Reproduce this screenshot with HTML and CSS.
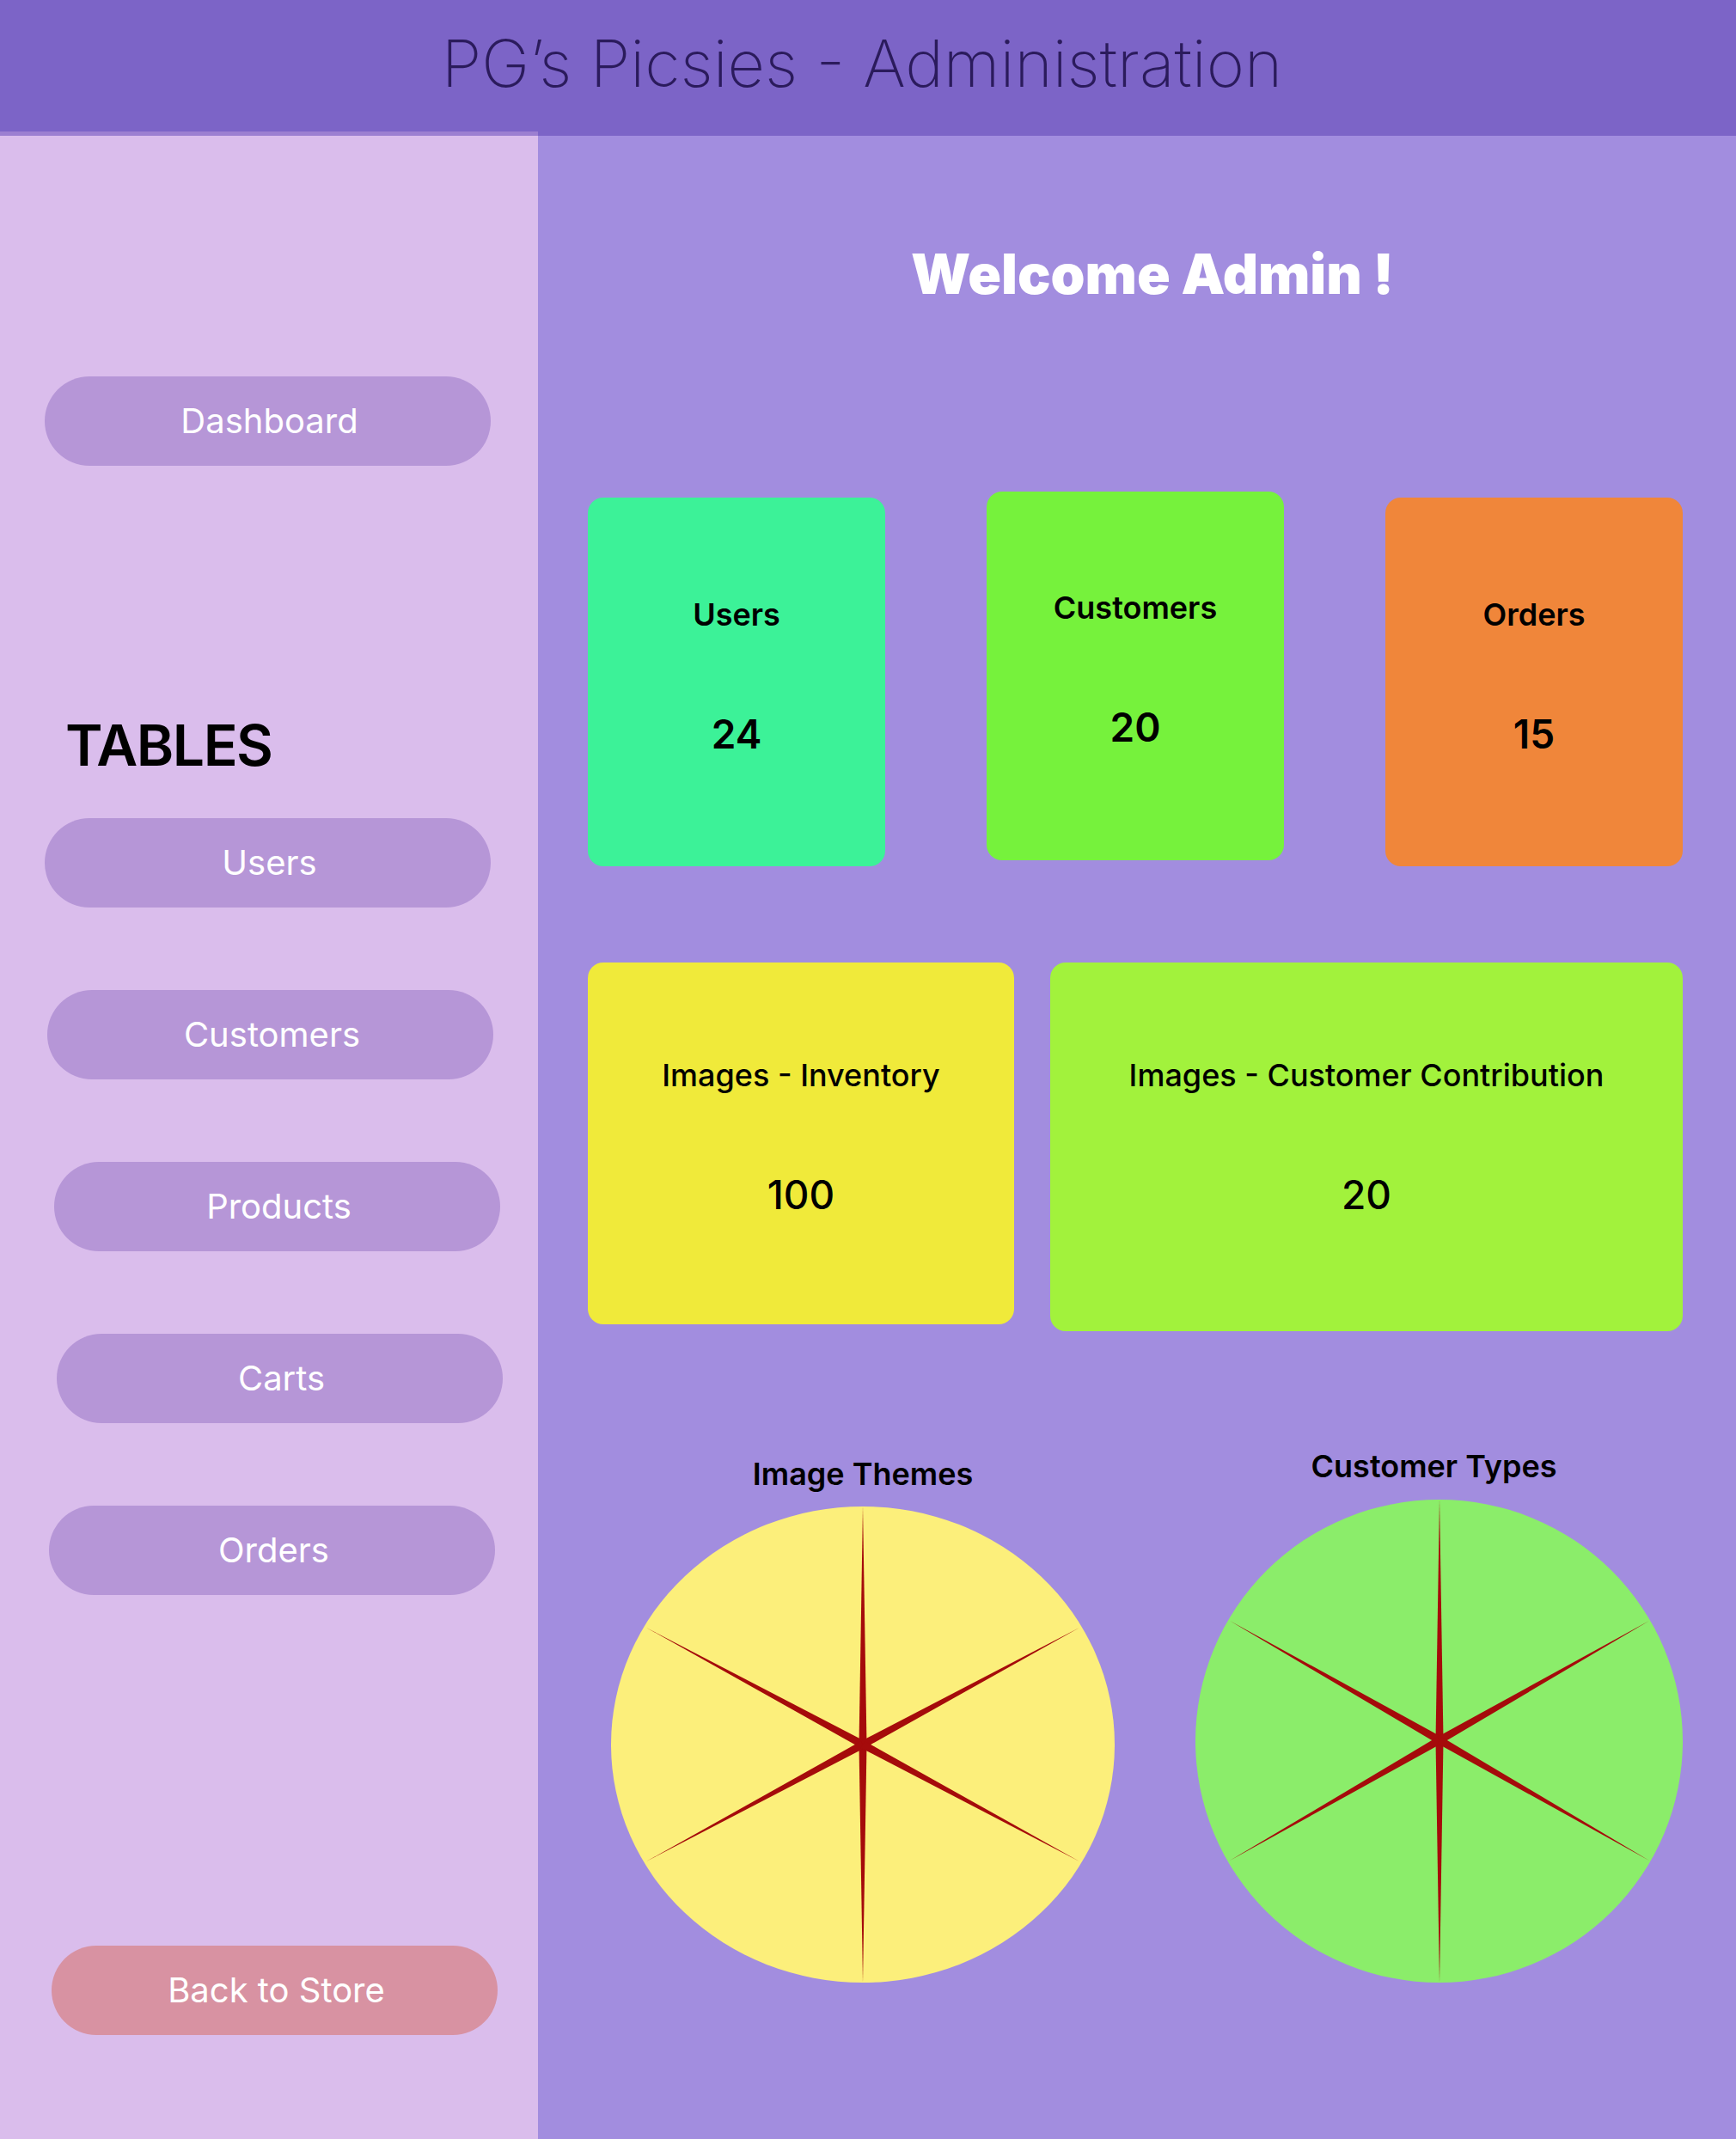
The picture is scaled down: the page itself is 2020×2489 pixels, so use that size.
FILE: index.html
```html
<!DOCTYPE html>
<html lang="en">
<head>
<meta charset="utf-8">
<title>PG’s Picsies - Administration</title>
<link rel="stylesheet" href="styles.css">
</head>
<body>
<div class="page">
  <header class="topbar">
    <h1 class="brand">PG’s Picsies - Administration</h1>
  </header>
  <div class="layout">
    <aside class="sidebar">
      <a class="nav-btn nav-dashboard" href="#">Dashboard</a>
      <h2 class="tables-title">TABLES</h2>
      <nav class="table-list">
        <a class="nav-btn nav-users" href="#">Users</a>
        <a class="nav-btn nav-customers" href="#">Customers</a>
        <a class="nav-btn nav-products" href="#">Products</a>
        <a class="nav-btn nav-carts" href="#">Carts</a>
        <a class="nav-btn nav-orders" href="#">Orders</a>
      </nav>
      <a class="nav-btn back-btn" href="#">Back to Store</a>
    </aside>
    <main class="content">
      <h2 class="welcome">Welcome Admin !</h2>
      <section class="stats-row">
        <div class="stat stat-users"><span class="stat-label">Users</span><span class="stat-value">24</span></div>
        <div class="stat stat-customers"><span class="stat-label">Customers</span><span class="stat-value">20</span></div>
        <div class="stat stat-orders"><span class="stat-label">Orders</span><span class="stat-value">15</span></div>
      </section>
      <section class="images-row">
        <div class="stat stat-inventory"><span class="stat-label light">Images - Inventory</span><span class="stat-value light">100</span></div>
        <div class="stat stat-contrib"><span class="stat-label light">Images - Customer Contribution</span><span class="stat-value light">20</span></div>
      </section>
      <section class="charts-row">
        <figure class="chart chart-themes">
          <figcaption class="chart-title">Image Themes</figcaption>
          <svg class="pie" width="586" height="554" viewBox="0 0 586 554">
            <ellipse cx="293" cy="277" rx="293" ry="277" fill="#fcef7b"/>
            <g fill="#a50b0b">
              <polygon points="293,0 297.5,277 288.5,277"/>
              <polygon points="293,554 297.5,277 288.5,277"/>
              <polygon points="41,141 295.2,273.1 290.8,280.9"/>
              <polygon points="545,141 295.2,280.9 290.8,273.1"/>
              <polygon points="41,413 290.8,273.1 295.2,280.9"/>
              <polygon points="545,413 290.8,280.9 295.2,273.1"/>
            </g>
          </svg>
        </figure>
        <figure class="chart chart-types">
          <figcaption class="chart-title">Customer Types</figcaption>
          <svg class="pie" width="567" height="562" viewBox="0 0 567 562">
            <ellipse cx="283.5" cy="281" rx="283.5" ry="281" fill="#8bed6a"/>
            <g fill="#a50b0b">
              <polygon points="284,0 288.5,280 279.5,280"/>
              <polygon points="284,562 288.5,280 279.5,280"/>
              <polygon points="40,141 286.2,276.1 281.8,283.9"/>
              <polygon points="528,141 286.2,283.9 281.8,276.1"/>
              <polygon points="40,420 281.8,276.1 286.2,283.9"/>
              <polygon points="528,420 281.8,283.9 286.2,276.1"/>
            </g>
          </svg>
        </figure>
      </section>
    </main>
  </div>
</div>
</body>
</html>
```
FILE: styles.css
```css
* { box-sizing: border-box; }
html, body { margin: 0; padding: 0; }
body {
  font-family: Inter, "Noto Sans", "Liberation Sans", sans-serif;
  background: #a28ddf;
}
.page {
  width: 2020px;
  height: 2489px;
  display: flex;
  flex-direction: column;
}
.topbar {
  height: 153px;
  background: #7c64c7;
  display: flex;
  justify-content: center;
  align-items: flex-start;
  flex: none;
}
.brand {
  margin: 36px 14px 0 0;
  font-size: 75.5px;
  line-height: 76px;
  font-weight: 200;
  color: #2b1b5c;
  letter-spacing: 0;
}
.layout {
  flex: 1;
  display: flex;
}
.sidebar {
  width: 626px;
  flex: none;
  background: #dabdec;
  border-top: 5px solid #9c7fd1;
  display: flex;
  flex-direction: column;
  align-items: flex-start;
  padding-top: 280px;
}
.nav-btn {
  display: flex;
  align-items: center;
  justify-content: center;
  width: 519px;
  height: 104px;
  padding: 0 0 2px 4px;
  border-radius: 52px;
  background: #b696d7;
  color: #ffffff;
  font-size: 40px;
  font-weight: 400;
  text-decoration: none;
  flex: none;
}
.nav-dashboard { margin-left: 52px; }
.tables-title {
  margin: 292px 0 0 76px;
  font-size: 66px;
  line-height: 66px;
  font-weight: 600;
  letter-spacing: -1.5px;
  color: #000000;
}
.table-list {
  margin-top: 52px;
  display: flex;
  flex-direction: column;
  gap: 96px;
}
.nav-users { margin-left: 52px; }
.nav-customers { margin-left: 55px; }
.nav-products { margin-left: 63px; }
.nav-carts { margin-left: 66px; }
.nav-orders { margin-left: 57px; }
.back-btn {
  margin: 408px 0 0 60px;
  background: #d892a2;
}
.content {
  flex: 1;
  border-top: 5px solid #7c64c7;
  padding: 129px 62px 0 58px;
  display: flex;
  flex-direction: column;
}
.welcome {
  margin: 0 0 0 40px;
  text-align: center;
  font-size: 64px;
  line-height: 64px;
  font-weight: 900;
  color: #ffffff;
}
.stats-row {
  margin-top: 221px;
  display: flex;
  justify-content: space-between;
  align-items: flex-start;
}
.stat {
  display: flex;
  flex-direction: column;
  align-items: center;
  border-radius: 18px;
  padding-top: 118px;
  color: #000000;
}
.stats-row .stat {
  width: 346px;
  height: 429px;
}
.stat-users { background: #3cf298; margin-top: 7px; }
.stat-customers { background: #76f23c; padding-top: 117px; }
.stat-orders { background: #f0863a; margin-top: 7px; }
.stat-label {
  font-size: 36px;
  line-height: 36px;
  font-weight: 600;
}
.stat-value {
  margin-top: 98px;
  font-size: 46px;
  line-height: 46px;
  font-weight: 600;
}
.light { font-weight: 500; }
.images-row {
  margin-top: 112px;
  display: grid;
  grid-template-columns: 496px 736px;
  column-gap: 42px;
  align-items: start;
}
.images-row .stat { padding-top: 113px; }
.stat-inventory { background: #f0ea3a; height: 421px; }
.stat-contrib { background: #a2f23c; height: 429px; }
.charts-row {
  margin: 139px 0 0 27px;
  display: flex;
  gap: 94px;
  align-items: flex-start;
}
.chart {
  margin: 0;
  display: flex;
  flex-direction: column;
  align-items: center;
}
.chart-themes { margin-top: 9px; }
.chart-title {
  font-size: 36px;
  line-height: 36px;
  font-weight: 600;
  color: #000000;
  margin-bottom: 20px;
}
.chart-types .chart-title { margin: 0 12px 21px 0; }
.pie { display: block; }
```
